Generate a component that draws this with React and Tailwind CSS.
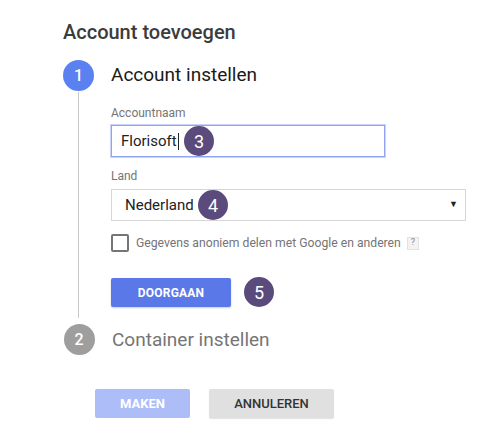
import React from 'react';

const Badge = ({ n, className }) => (
  <span
    className={`absolute flex h-[30px] w-[30px] items-center justify-center rounded-full bg-[#5b4a7c] text-[18px] text-white ${className}`}
  >
    {n}
  </span>
);

const App = () => {
  return (
    <div
      className="min-h-[441px] w-[494px] bg-white pl-[63px] pt-[20px] text-[#212121]"
      style={{ fontFamily: 'Roboto, "Liberation Sans", sans-serif' }}
    >
      <h1 className="text-[20px] font-medium leading-[24px] text-[#3c3c3c]">Account toevoegen</h1>

      {/* Step 1 */}
      <div className="mt-[16px] flex">
        <div className="flex w-[32px] flex-col items-center">
          <div className="flex h-[31px] w-[31px] items-center justify-center rounded-full bg-[#5b80f0] text-[16px] font-medium text-white">
            1
          </div>
          <div className="mb-[6px] mt-[1px] w-px flex-1 bg-[#c8c8c8]" />
        </div>

        <div className="ml-[17px] flex-1 pr-[28px]">
          <div className="flex h-[31px] items-center text-[19px] text-[#1a1a1a]">Account instellen</div>

          <div className="mt-[15px] text-[12px] leading-[14px] text-[#757575]">Accountnaam</div>
          <div className="relative mt-[5px] w-[274px]">
            <div className="flex h-[32px] items-center border border-[#8fa4f2] pl-[9px] text-[15px] text-[#222] shadow-[0_0_0_1px_#c9d3fa]">
              Florisoft<span className="ml-[1px] inline-block h-[17px] w-px bg-[#222]" />
            </div>
            <Badge n="3" className="left-[73px] top-[1px]" />
          </div>

          <div className="mt-[12px] text-[12px] leading-[14px] text-[#757575]">Land</div>
          <div className="relative mt-[6px] w-[355px]">
            <div className="flex h-[32px] items-center justify-between border border-[#d6d6d6] pl-[13px] pr-[7px] text-[15px] text-[#222]">
              <span>Nederland</span>
              <span className="text-[9px] text-[#222]">▼</span>
            </div>
            <Badge n="4" className="left-[87px] top-[1px]" />
          </div>

          <label className="mt-[13px] flex items-center">
            <span className="h-[18px] w-[18px] rounded-[2px] border-2 border-[#757575]" />
            <span className="ml-[7px] text-[12.2px] text-[#757575]">Gegevens anoniem delen met Google en anderen</span>
            <span className="ml-[6px] flex h-[13px] w-[12px] items-center justify-center border border-[#e2e2e2] bg-[#f3f3f3] text-[9px] text-[#888]">
              ?
            </span>
          </label>

          <div className="relative mt-[26px] pb-[17px]">
            <button className="flex h-[29px] w-[120px] items-center justify-center rounded-[2px] bg-[#5b78e8] text-[12px] font-bold tracking-[0.2px] text-white shadow-[0_1px_2px_rgba(0,0,0,0.2)]">
              DOORGAAN
            </button>
            <Badge n="5" className="left-[133px] top-[-1px]" />
          </div>
        </div>
      </div>

      {/* Step 2 */}
      <div className="flex items-center">
        <div className="flex w-[32px] justify-center">
          <div className="flex h-[31px] w-[31px] items-center justify-center rounded-full bg-[#9e9e9e] text-[16px] font-medium text-white">
            2
          </div>
        </div>
        <div className="ml-[17px] text-[19px] text-[#757575]">Container instellen</div>
      </div>

      <div className="ml-[32px] mt-[34px] flex gap-[19px]">
        <button className="flex h-[29px] w-[95px] items-center justify-center rounded-[2px] bg-[#adbdf8] text-[13px] font-bold text-white">
          MAKEN
        </button>
        <button className="flex h-[29px] w-[125px] items-center justify-center rounded-[2px] bg-[#e0e0e0] text-[13px] font-medium text-[#333] shadow-[0_1px_1px_rgba(0,0,0,0.12)]">
          ANNULEREN
        </button>
      </div>
    </div>
  );
};

export default App;
